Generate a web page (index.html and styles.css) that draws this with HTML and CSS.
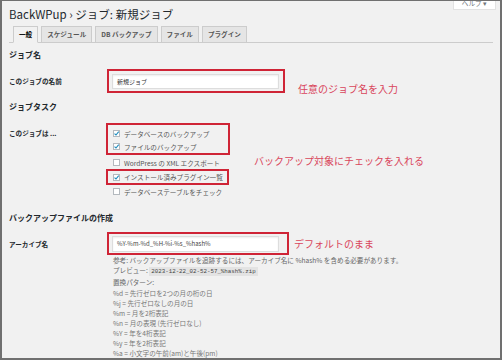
FILE: index.html
```html
<!DOCTYPE html>
<html lang="ja">
<head>
<meta charset="utf-8">
<title>BackWPup ジョブ</title>
<link rel="stylesheet" href="styles.css">
</head>
<body>
<div class="frame">
  <div class="help">ヘルプ ▾</div>
  <h1 class="title">BackWPup › ジョブ: 新規ジョブ</h1>
  <nav class="tabs">
    <span class="tab active">一般</span>
    <span class="tab">スケジュール</span>
    <span class="tab">DB バックアップ</span>
    <span class="tab">ファイル</span>
    <span class="tab">プラグイン</span>
  </nav>

  <h2 class="sec">ジョブ名</h2>
  <div class="row row-name">
    <div class="label">このジョブの名前</div>
    <div class="field">
      <div class="mark mark-name"><div class="input">新規ジョブ</div></div>
      <span class="note note-name">任意のジョブ名を入力</span>
    </div>
  </div>

  <h2 class="sec sec-tasks">ジョブタスク</h2>
  <div class="row row-tasks">
    <div class="label label-tasks">このジョブは ...</div>
    <div class="field">
      <div class="checklist">
        <div class="mark mark-tasks">
          <label class="item"><svg class="cb" viewBox="0 0 7 7"><rect x=".5" y=".5" width="6" height="6" fill="#fff" stroke="#b4b9be"/><path d="M1.5 3.6 L3 5 L5.7 1.7" fill="none" stroke="#1e8cbe" stroke-width="1.1"/></svg>データベースのバックアップ</label>
          <label class="item"><svg class="cb" viewBox="0 0 7 7"><rect x=".5" y=".5" width="6" height="6" fill="#fff" stroke="#b4b9be"/><path d="M1.5 3.6 L3 5 L5.7 1.7" fill="none" stroke="#1e8cbe" stroke-width="1.1"/></svg>ファイルのバックアップ</label>
        </div>
        <label class="item item-wp"><svg class="cb" viewBox="0 0 7 7"><rect x=".5" y=".5" width="6" height="6" fill="#fff" stroke="#b4b9be"/></svg>WordPress の XML エクスポート</label>
        <div class="mark mark-plugin">
          <label class="item item-plugin"><svg class="cb" viewBox="0 0 7 7"><rect x=".5" y=".5" width="6" height="6" fill="#fff" stroke="#b4b9be"/><path d="M1.5 3.6 L3 5 L5.7 1.7" fill="none" stroke="#1e8cbe" stroke-width="1.1"/></svg>インストール済みプラグイン一覧</label>
        </div>
        <label class="item"><svg class="cb" viewBox="0 0 7 7"><rect x=".5" y=".5" width="6" height="6" fill="#fff" stroke="#b4b9be"/></svg>データベーステーブルをチェック</label>
      </div>
      <span class="note note-tasks">バックアップ対象にチェックを入れる</span>
    </div>
  </div>

  <h2 class="sec sec-file">バックアップファイルの作成</h2>
  <div class="row row-archive">
    <div class="label">アーカイブ名</div>
    <div class="field">
      <div class="mark mark-archive"><div class="input input-archive">%Y-%m-%d_%H-%i-%s_%hash%</div></div>
      <span class="note note-archive">デフォルトのまま</span>
    </div>
    <div class="desc">
      <p class="d1">参考: バックアップファイルを追跡するには、アーカイブ名に %hash% を含める必要があります。</p>
      <p class="d2">プレビュー: <code class="code">2023-12-22_02-52-57_%hash%.zip</code></p>
      <p class="d2">置換パターン:</p>
      <ul class="patterns">
        <li>%d = 先行ゼロを2つの月の桁の日</li>
        <li>%j = 先行ゼロなしの月の日</li>
        <li>%m = 月を2桁表記</li>
        <li>%n = 月の表現 (先行ゼロなし)</li>
        <li>%Y = 年を4桁表記</li>
        <li>%y = 年を2桁表記</li>
        <li>%a = 小文字の午前(am)と午後(pm)</li>
      </ul>
    </div>
  </div>
</div>
</body>
</html>
```

FILE: styles.css
```css
* { box-sizing: border-box; }
html, body { margin: 0; padding: 0; background: #f1f1f1; }
body {
  font-family: "Noto Sans CJK JP", "Noto Sans", sans-serif;
  color: #444;
}
.frame {
  position: relative;
  width: 502px;
  height: 360px;
  overflow: hidden;
  background: #f1f1f1;
  border: 2px solid #707070;
  border-top-width: 1px;
  padding: 0 7px;
}
.help {
  position: absolute;
  top: -5px;
  right: 4px;
  width: 43px;
  height: 14px;
  background: #fff;
  border: 1px solid #e2e2e2;
  border-top: none;
  font-size: 6.6px;
  line-height: 14px;
  text-align: center;
  color: #72777c;
}
.title {
  margin: 5px 0 0;
  font-size: 11.5px;
  line-height: 16px;
  font-weight: 400;
  color: #23282d;
  white-space: nowrap;
}
.tabs {
  display: flex;
  gap: 3px;
  margin-top: 4px;
  padding-left: 4px;
  border-bottom: 1px solid #ccc;
}
.tab {
  height: 17px;
  margin-bottom: -1px;
  padding: 0 5px;
  border: 1px solid #ccc;
  background: #e5e5e5;
  font-size: 6.6px;
  line-height: 15px;
  font-weight: 600;
  color: #555;
  white-space: nowrap;
}
.tab.active {
  background: #f1f1f1;
  border-bottom-color: #f1f1f1;
  color: #000;
}
.sec {
  margin: 6px 0 0;
  font-size: 8px;
  line-height: 12px;
  font-weight: 700;
  color: #23282d;
}
.sec-tasks { margin-top: 8px; }
.sec-file { margin-top: 14px; }
.row {
  display: grid;
  grid-template-columns: 104px 1fr;
  align-items: center;
  margin-top: 8px;
}
.row-tasks { margin-top: 10px; align-items: start; }
.label {
  font-size: 6.6px;
  line-height: 12px;
  font-weight: 700;
  color: #23282d;
  white-space: nowrap;
}
.label-tasks { margin-top: 4px; }
.field {
  display: flex;
  align-items: center;
}
.mark {
  border: 2px solid #cf2436;
}
.mark-name {
  margin-left: -6px;
  padding: 3px 4px 2px 3px;
}
.mark-archive {
  margin-left: -6px;
  padding: 2px 8px 1px 3px;
}
.input {
  width: 167px;
  height: 15px;
  background: #fff;
  border: 1px solid #ddd;
  box-shadow: inset 0 1px 2px rgba(0,0,0,.07);
  padding: 0 4px;
  font-size: 6px;
  line-height: 13px;
  color: #333;
  white-space: nowrap;
}
.input-archive { height: 16px; line-height: 14px; color: #444; }
.note {
  font-size: 10px;
  line-height: 12px;
  color: #d9455b;
  white-space: nowrap;
}
.row-name .field { align-items: flex-end; }
.note-name { margin-left: 13px; margin-bottom: -2px; }
.note-archive { margin-left: 5px; }
.note-tasks { align-self: center; }
.checklist { width: 141px; }
.mark-tasks {
  width: 124px;
  margin-left: -7px;
  padding: 2px 5px 0;
}
.mark-plugin {
  width: 123px;
  margin-left: -7px;
  padding: 0 5px;
}
.item {
  display: flex;
  align-items: center;
  gap: 4px;
  height: 13px;
  font-size: 6.6px;
  color: #555;
  white-space: nowrap;
}
.item-wp { margin-top: 1px; }
.item-plugin { height: 12px; }
.cb { width: 7px; height: 7px; flex: none; display: block; }
.desc {
  grid-column: 2;
  font-size: 6.6px;
  color: #666;
}
.desc p { margin: 0; white-space: nowrap; }
.d1 { line-height: 10px; }
.d2 { line-height: 11px; }
.code {
  font-family: "Liberation Mono", "DejaVu Sans Mono", monospace;
  font-size: 5.8px;
  background: #e3e3e3;
  padding: 1px 2px;
  color: #444;
}
.patterns {
  list-style: none;
  margin: 0;
  padding: 0;
  line-height: 10px;
  color: #777;
}
.patterns li { white-space: nowrap; }
```
